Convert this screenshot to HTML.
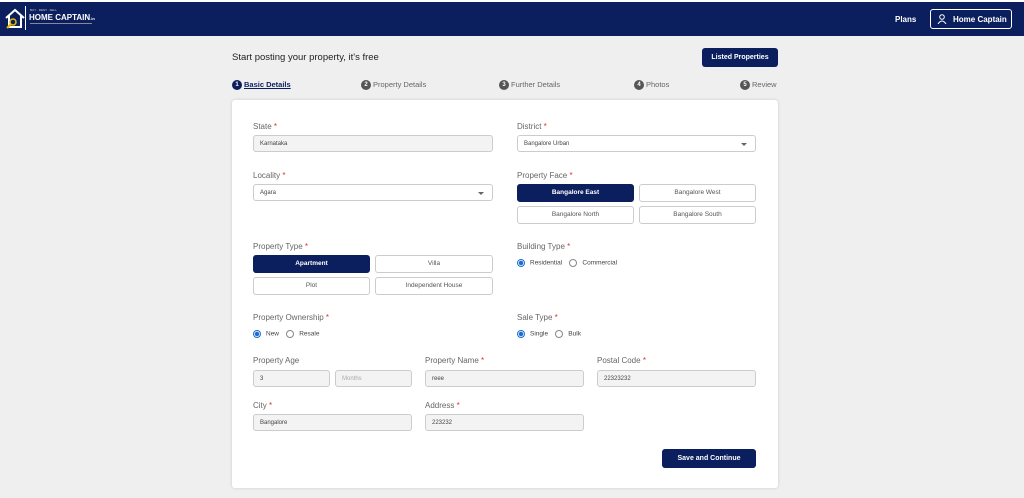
<!DOCTYPE html>
<html><head><style>
*{box-sizing:border-box;margin:0;padding:0}
body{width:1024px;height:498px;background:#efefef;font-family:"Liberation Sans",sans-serif;position:relative;overflow:hidden;color:#333}
.a{position:absolute}
.hdr{left:0;top:0;width:1024px;height:36px;background:#0b1f5e;border-top:2px solid #fff}
.lbl{font-size:8px;color:#666}
.lbl i{color:#d33;font-style:normal}
.in{height:17px;border:1px solid #ccc;border-radius:3px;background:#f3f3f3;font-size:6px;color:#444;padding:5px 6px}
.sel{background:#fff}
.sel:after{content:"";position:absolute;right:8px;top:7px;border:3px solid transparent;border-top:3px solid #666}
.btn{height:18px;border:1px solid #ccc;border-radius:3px;background:#fff;font-size:6.5px;color:#555;text-align:center;line-height:16px}
.on{background:#0b1f5e;color:#fff;border-color:#0b1f5e;font-weight:bold}
.r{font-size:6.5px;color:#444}
.rd{display:inline-block;width:8px;height:8px;border:1px solid #888;border-radius:50%;vertical-align:middle;margin-right:5px}
.rd.c{border-color:#1c6fd0;background:radial-gradient(circle,#1c6fd0 0 2px,#fff 2.5px)}
.st{font-size:7.5px;color:#666;top:80px}
.st b{display:inline-block;width:10px;height:10px;border-radius:50%;background:#555;color:#fff;font-size:6px;text-align:center;line-height:10px;vertical-align:middle;margin-right:2px}
</style></head><body>
<div class="a hdr">
 <svg class="a" style="left:4px;top:6px" width="22" height="22" viewBox="0 0 22 22"><path d="M2 10 L11 2 L20 10 M5 8 V19 H17 V8" fill="none" stroke="#fff" stroke-width="2"/><circle cx="9" cy="14" r="3" fill="none" stroke="#e6b800" stroke-width="1.5"/><path d="M7 16 L3 20" stroke="#e6b800" stroke-width="2"/></svg>
 <div class="a" style="left:25px;top:4px;width:1px;height:24px;background:#fff"></div>
 <div class="a" style="left:30px;top:6px;font-size:3px;color:#ccc">BUY · RENT · SELL</div>
 <div class="a" style="left:29px;top:11px;font-size:8px;color:#fff;font-weight:bold">HOME CAPTAIN<span style="font-size:4px">.in</span></div>
 <div class="a" style="left:30px;top:21px;width:62px;height:1px;background:#889"></div>
 <div class="a" style="left:895px;top:13px;font-size:8px;color:#fff;font-weight:bold">Plans</div>
 <div class="a" style="left:930px;top:7px;width:82px;height:20px;border:1px solid #fff;border-radius:3px;color:#fff;font-size:8px;font-weight:bold;padding:5px 0 0 22px">Home Captain</div>
 <svg class="a" style="left:937px;top:12px" width="10" height="10" viewBox="0 0 10 10"><circle cx="5" cy="3" r="2.3" fill="none" stroke="#fff"/><path d="M1 10 Q5 4 9 10" fill="none" stroke="#fff"/></svg>
</div>
<div class="a" style="left:232px;top:52px;font-size:9.5px;color:#222">Start posting your property, it's free</div>
<div class="a on" style="left:702px;top:48px;width:76px;height:19px;border-radius:3px;font-size:7px;color:#fff;text-align:center;line-height:19px;background:#0b1f5e;font-weight:bold">Listed Properties</div>
<div class="a st" style="left:232px;color:#0b1f5e;font-weight:bold;text-decoration:underline"><b style="background:#0b1f5e">1</b>Basic Details</div>
<div class="a st" style="left:361px"><b>2</b>Property Details</div>
<div class="a st" style="left:499px"><b>3</b>Further Details</div>
<div class="a st" style="left:634px"><b>4</b>Photos</div>
<div class="a st" style="left:740px"><b>5</b>Review</div>
<div class="a" style="left:232px;top:100px;width:546px;height:388px;background:#fff;border-radius:3px;box-shadow:0 0 3px rgba(0,0,0,.15)"></div>

<div class="a lbl" style="left:253px;top:122px">State <i>*</i></div>
<div class="a in" style="left:253px;top:135px;width:240px">Karnataka</div>
<div class="a lbl" style="left:517px;top:122px">District <i>*</i></div>
<div class="a in sel" style="left:517px;top:135px;width:239px">Bangalore Urban</div>

<div class="a lbl" style="left:253px;top:171px">Locality <i>*</i></div>
<div class="a in sel" style="left:253px;top:184px;width:240px">Agara</div>
<div class="a lbl" style="left:517px;top:171px">Property Face <i>*</i></div>
<div class="a btn on" style="left:517px;top:184px;width:117px">Bangalore East</div>
<div class="a btn" style="left:639px;top:184px;width:117px">Bangalore West</div>
<div class="a btn" style="left:517px;top:206px;width:117px">Bangalore North</div>
<div class="a btn" style="left:639px;top:206px;width:117px">Bangalore South</div>

<div class="a lbl" style="left:253px;top:242px">Property Type <i>*</i></div>
<div class="a btn on" style="left:253px;top:255px;width:117px">Apartment</div>
<div class="a btn" style="left:375px;top:255px;width:118px">Villa</div>
<div class="a btn" style="left:253px;top:277px;width:117px">Plot</div>
<div class="a btn" style="left:375px;top:277px;width:118px">Independent House</div>
<div class="a lbl" style="left:517px;top:242px">Building Type <i>*</i></div>
<div class="a r" style="left:517px;top:259px"><span class="rd c"></span>Residential &nbsp;&nbsp;&nbsp;<span class="rd"></span>Commercial</div>

<div class="a lbl" style="left:253px;top:313px">Property Ownership <i>*</i></div>
<div class="a r" style="left:253px;top:330px"><span class="rd c"></span>New &nbsp;&nbsp;&nbsp;<span class="rd"></span>Resale</div>
<div class="a lbl" style="left:517px;top:313px">Sale Type <i>*</i></div>
<div class="a r" style="left:517px;top:330px"><span class="rd c"></span>Single &nbsp;&nbsp;&nbsp;<span class="rd"></span>Bulk</div>

<div class="a lbl" style="left:253px;top:356px">Property Age</div>
<div class="a in" style="left:253px;top:370px;width:77px">3</div>
<div class="a in" style="left:335px;top:370px;width:77px;color:#aaa">Months</div>
<div class="a lbl" style="left:425px;top:356px">Property Name <i>*</i></div>
<div class="a in" style="left:425px;top:370px;width:159px">reee</div>
<div class="a lbl" style="left:597px;top:356px">Postal Code <i>*</i></div>
<div class="a in" style="left:597px;top:370px;width:159px">22323232</div>

<div class="a lbl" style="left:253px;top:401px">City <i>*</i></div>
<div class="a in" style="left:253px;top:414px;width:159px">Bangalore</div>
<div class="a lbl" style="left:425px;top:401px">Address <i>*</i></div>
<div class="a in" style="left:425px;top:414px;width:159px">223232</div>

<div class="a" style="left:662px;top:449px;width:94px;height:19px;background:#0b1f5e;border-radius:3px;color:#fff;font-size:7px;font-weight:bold;text-align:center;line-height:19px">Save and Continue</div>
</body></html>
